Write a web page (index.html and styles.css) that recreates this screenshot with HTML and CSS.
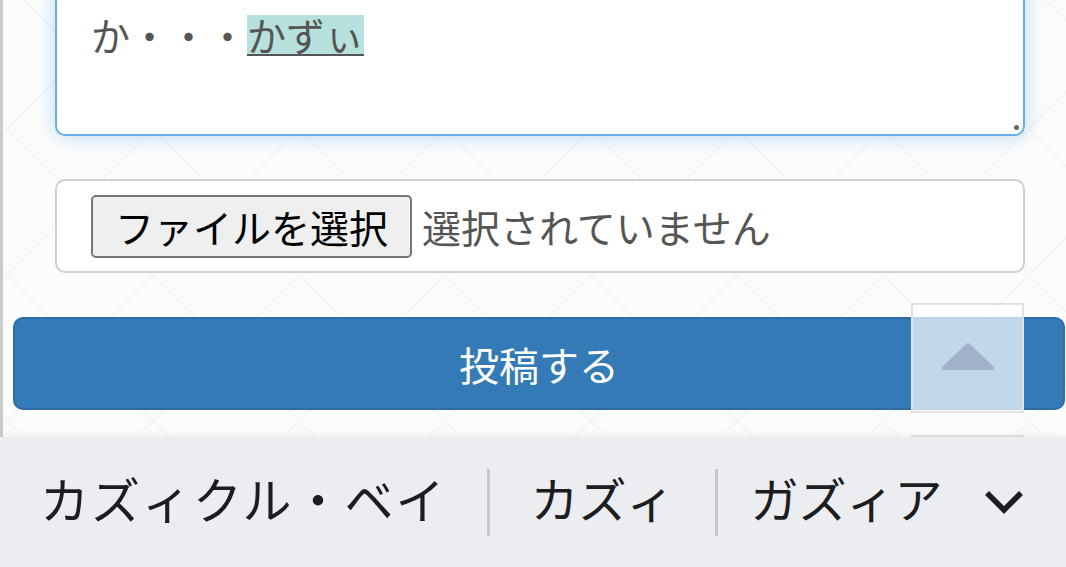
FILE: index.html
```html
<!DOCTYPE html>
<html lang="ja">
<head>
  <meta charset="UTF-8">
  <title>投稿フォーム</title>
  <link rel="stylesheet" href="styles.css">
</head>
<body>
  <div class="page">
    <div class="main">
      <form class="post-form" action="#" method="post">
        <div class="textbox">
          <p>か・・・<span class="ime">かずぃ</span></p>
          <span class="grip"></span>
        </div>
        <div class="file-field">
          <button type="button" class="file-btn">ファイルを選択</button>
          <span class="file-name">選択されていません</span>
        </div>
        <button type="submit" class="submit">投稿する</button>
      </form>
      <a href="#" class="to-top">
        <svg width="56" height="30" viewBox="0 0 56 30">
          <polygon points="4,27 28,4 52,27" fill="#9fb2c8" stroke="#9fb2c8" stroke-width="4" stroke-linejoin="round"/>
        </svg>
      </a>
      <span class="to-top next"></span>
    </div>
    <nav class="tabs">
      <a href="#" class="wide">カズィクル・ベイ</a>
      <span class="sep"></span>
      <a href="#">カズィ</a>
      <span class="sep"></span>
      <a href="#" class="last">ガズィア</a>
      <svg class="chev" width="40" height="26" viewBox="0 0 40 26">
        <polyline points="3,4 20,21 37,4" fill="none" stroke="#1c1d20" stroke-width="5.5"/>
      </svg>
    </nav>
  </div>
</body>
</html>
```

FILE: styles.css
```css
body {
  margin: 0;
  font-family: "Noto Sans CJK JP", "Noto Sans", sans-serif;
  overflow: hidden;
}
.page {
  height: 567px;
  display: flex;
  flex-direction: column;
}
.main {
  flex: 1;
  position: relative;
  overflow: hidden;
  border-left: 3px solid #cbcbcb;
  background-color: #fcfcfc;
  background-image:
    linear-gradient(45deg, transparent 49.5%, #f5f5f5 49.7%, #f5f5f5 50.3%, transparent 50.5%),
    linear-gradient(-45deg, transparent 49.5%, #f5f5f5 49.7%, #f5f5f5 50.3%, transparent 50.5%);
  background-size: 146px 146px;
  background-position: 4px -17px;
}
.post-form {
  display: flex;
  flex-direction: column;
  padding: 0 1px 0 10px;
}
.textbox {
  position: relative;
  margin: -20px 40px 0 42px;
  height: 152px;
  padding: 0 34px;
  background: #fff;
  border: 2px solid #66afe9;
  border-radius: 10px;
  box-shadow: 0 0 20px rgba(102, 175, 233, 0.45);
}
.textbox p {
  margin: 24px 0 0;
  font-size: 39px;
  line-height: 56px;
  color: #555;
}
.ime {
  display: inline-block;
  line-height: 39px;
  background: #b6e1dd;
  text-decoration: underline;
  text-decoration-thickness: 2px;
  text-underline-offset: 3px;
}
.grip {
  position: absolute;
  right: 4px;
  bottom: 4px;
  width: 5px;
  height: 5px;
  background: #666;
  border-radius: 50%;
}
.file-field {
  margin: 43px 40px 0 42px;
  height: 90px;
  display: flex;
  align-items: center;
  gap: 10px;
  padding: 0 34px;
  background: #fff;
  border: 2px solid #cfcfcf;
  border-radius: 10px;
}
.file-btn {
  height: 63px;
  padding: 0 22px;
  font-family: inherit;
  font-size: 39px;
  color: #000;
  background: #efefef;
  border: 2px solid #767676;
  border-radius: 5px;
}
.file-name {
  font-size: 39px;
  color: #555;
}
.submit {
  margin-top: 44px;
  height: 93px;
  font-family: inherit;
  font-size: 40px;
  color: #fff;
  background: #337ab7;
  border: 2px solid #2e6da4;
  border-radius: 10px;
  cursor: pointer;
}
.to-top {
  position: absolute;
  left: 908px;
  top: 303px;
  width: 109px;
  height: 106px;
  display: flex;
  align-items: center;
  justify-content: center;
  background: rgba(255, 255, 255, 0.7);
  border: 2px solid #e2e2e2;
}
.to-top svg {
  margin-bottom: 4px;
}
.to-top.next {
  top: 435px;
}
.tabs {
  position: relative;
  z-index: 2;
  height: 130px;
  display: flex;
  align-items: center;
  padding: 0 0 10px 40px;
  box-sizing: border-box;
  background: #ecedf1;
  box-shadow: 0 -3px 8px rgba(0, 0, 0, 0.05);
}
.tabs a {
  font-size: 48px;
  color: #1c1d20;
  text-decoration: none;
}
.tabs a.wide {
  font-size: 49px;
  letter-spacing: 2px;
}
.tabs a.last {
  margin-left: -8px;
}
.sep {
  width: 3px;
  height: 67px;
  margin: 10px 41px 0 40px;
  background: #c4c8d0;
}
.chev {
  margin: 10px 0 0 41px;
}
```
